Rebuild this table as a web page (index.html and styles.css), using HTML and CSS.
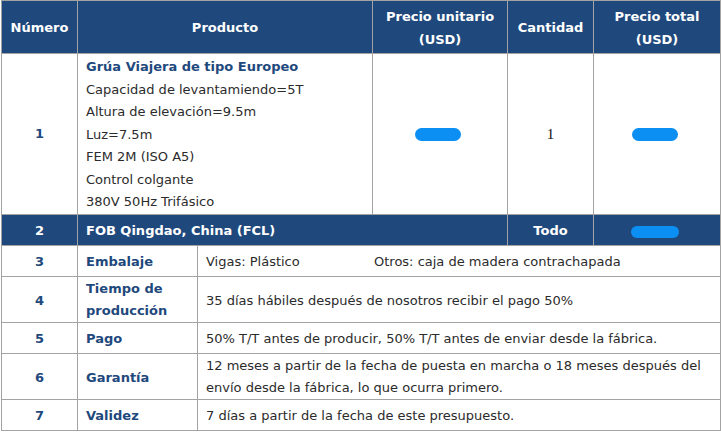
FILE: index.html
```html
<!DOCTYPE html>
<html lang="es">
<head>
<meta charset="utf-8">
<title>Cotización</title>
<link rel="stylesheet" href="styles.css">
</head>
<body>
<table class="quote">
  <colgroup>
    <col class="c-num">
    <col class="c-label">
    <col class="c-desc">
    <col class="c-unit">
    <col class="c-qty">
    <col class="c-total">
  </colgroup>
  <thead>
    <tr class="head">
      <th>Número</th>
      <th colspan="2">Producto</th>
      <th>Precio unitario<br>(USD)</th>
      <th>Cantidad</th>
      <th>Precio total<br>(USD)</th>
    </tr>
  </thead>
  <tbody>
    <tr class="item">
      <td class="num">1</td>
      <td colspan="2" class="product">
        <div class="title">Grúa Viajera de tipo Europeo</div>
        <div>Capacidad de levantamiendo=5T</div>
        <div>Altura de elevación=9.5m</div>
        <div>Luz=7.5m</div>
        <div>FEM 2M (ISO A5)</div>
        <div>Control colgante</div>
        <div>380V 50Hz Trifásico</div>
      </td>
      <td class="center"><span class="blur"></span></td>
      <td class="center qty">1</td>
      <td class="center"><span class="blur"></span></td>
    </tr>
    <tr class="band">
      <td class="num">2</td>
      <td colspan="3" class="band-text">FOB Qingdao, China (FCL)</td>
      <td class="center">Todo</td>
      <td class="center"><span class="blur blur-band"></span></td>
    </tr>
    <tr class="term">
      <td class="num">3</td>
      <td class="label">Embalaje</td>
      <td colspan="4" class="text split"><span class="first">Vigas: Plástico</span><span>Otros: caja de madera contrachapada</span></td>
    </tr>
    <tr class="term">
      <td class="num">4</td>
      <td class="label multi">Tiempo de producción</td>
      <td colspan="4" class="text">35 días hábiles después de nosotros recibir el pago 50%</td>
    </tr>
    <tr class="term">
      <td class="num">5</td>
      <td class="label">Pago</td>
      <td colspan="4" class="text">50% T/T antes de producir, 50% T/T antes de enviar desde la fábrica.</td>
    </tr>
    <tr class="term">
      <td class="num">6</td>
      <td class="label">Garantía</td>
      <td colspan="4" class="text multi">12 meses a partir de la fecha de puesta en marcha o 18 meses después del envío desde la fábrica, lo que ocurra primero.</td>
    </tr>
    <tr class="term">
      <td class="num">7</td>
      <td class="label">Validez</td>
      <td colspan="4" class="text">7 días a partir de la fecha de este presupuesto.</td>
    </tr>
  </tbody>
</table>
</body>
</html>
```

FILE: styles.css
```css
html, body {
  margin: 0;
  padding: 0;
  background: #ffffff;
}

.quote {
  border-collapse: collapse;
  table-layout: fixed;
  width: 719px;
  margin: 0 0 0 1px;
  font-family: "DejaVu Sans", Verdana, sans-serif;
  font-size: 13px;
  line-height: 22.6px;
  color: #2b2b2b;
}

.c-num { width: 76px; }
.c-label { width: 120px; }
.c-desc { width: 175px; }
.c-unit { width: 135px; }
.c-qty { width: 86px; }
.c-total { width: 127px; }

.quote th,
.quote td {
  border: 1px solid #a3a3a3;
  padding: 4px 8px 0;
  vertical-align: middle;
}

.head th {
  background: #1f497d;
  color: #ffffff;
  font-weight: bold;
  text-align: center;
  height: 49px;
  padding: 3px 4px 0;
}

.num {
  text-align: center;
  font-weight: bold;
  color: #1f497d;
}

.item td {
  height: 155px;
  padding-top: 2px;
}

.item .product {
  line-height: 22.5px;
}

.product .title {
  font-weight: bold;
  color: #1f497d;
}

.center {
  text-align: center;
}

.qty {
  font-family: "Liberation Serif", "Times New Roman", serif;
  font-size: 15px;
  color: #111111;
}

.blur {
  display: inline-block;
  width: 46px;
  height: 13px;
  margin-right: 5px;
  border-radius: 7px;
  background: #0b8ff2;
  vertical-align: middle;
}

.blur-band {
  width: 48px;
  height: 12px;
}

.band td {
  background: #1f497d;
  color: #ffffff;
  font-weight: bold;
  height: 26px;
}

.band .num {
  color: #ffffff;
}

.term td {
  height: 26px;
}

.term td.multi {
  line-height: 22px;
  padding-top: 1px;
}

.label {
  font-weight: bold;
  color: #1f497d;
}

.split .first {
  display: inline-block;
  width: 168px;
}
```
